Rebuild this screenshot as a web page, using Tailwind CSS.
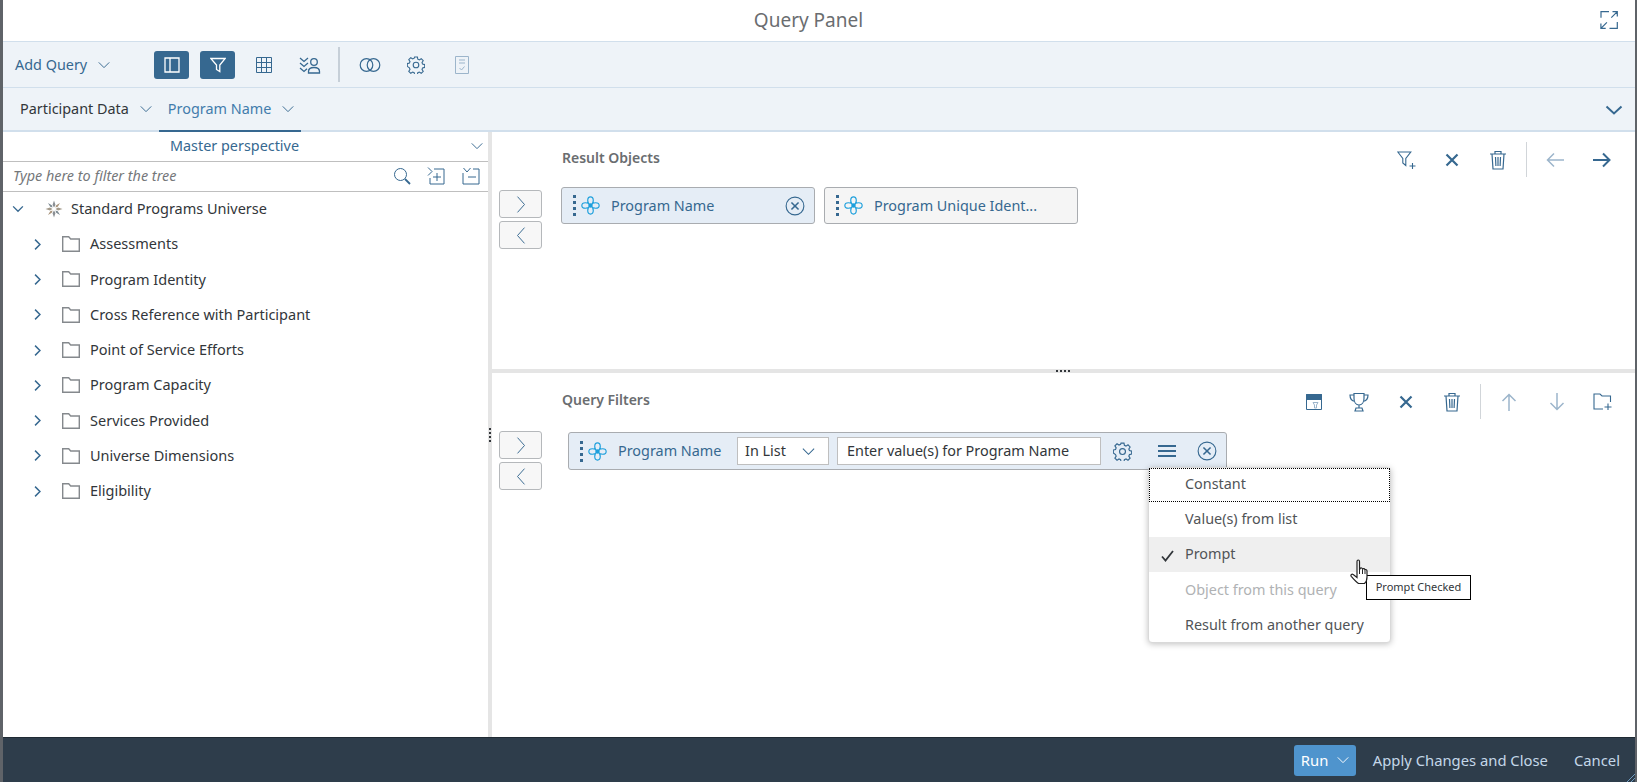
<!DOCTYPE html>
<html lang="en">
<head>
<meta charset="utf-8">
<title>Query Panel</title>
<script src="https://cdn.jsdelivr.net/npm/@tailwindcss/browser@4"></script>
</head>
<body class="m-0 overflow-hidden bg-white">
<svg class="hidden" xmlns="http://www.w3.org/2000/svg">
  <defs>
    <symbol id="down" viewBox="0 0 16 16"><path d="M2 5 8 11l6-6" fill="none" stroke="currentColor" stroke-width="1.100"/></symbol>
    <symbol id="right" viewBox="0 0 16 16"><path d="M5 2l6 6-6 6" fill="none" stroke="currentColor" stroke-width="1.800"/></symbol>
    <symbol id="rthin" viewBox="0 0 16 24"><path d="M4 3l8 9-8 9" fill="none" stroke="currentColor" stroke-width="1.100"/></symbol>
    <symbol id="lthin" viewBox="0 0 16 24"><path d="M12 3l-8 9 8 9" fill="none" stroke="currentColor" stroke-width="1.100"/></symbol>
    <symbol id="folder" viewBox="0 0 18 16"><path d="M.7 15.300V.7h6l2 2.300h8.600v12.300z" fill="none" stroke="#85898d" stroke-width="1.400"/></symbol>
    <symbol id="flower" viewBox="0 0 18 18" fill="none" stroke="#1c9fdc" stroke-width="1.100"><path d="M9 9C5.500 7 5.500 .8 9 .8S12.500 7 9 9zM9 9c3.500 2 3.500 8.200 0 8.200S5.500 11 9 9zM9 9C7 12.500 .8 12.500 .8 9S7 5.500 9 9zM9 9c2-3.500 8.200-3.500 8.200 0S11 12.500 9 9z"/><circle cx="9" cy="9" r="1.500" fill="#1c9fdc"/></symbol>
    <symbol id="cx" viewBox="0 0 18 18" fill="none" stroke="#366890" stroke-width="1"><circle cx="9" cy="9" r="8"/><path d="M5.800 5.800l6.400 6.400M12.200 5.800l-6.400 6.400" stroke-width="1.400"/></symbol>
    <symbol id="gear" viewBox="0 0 18 18" fill="none" stroke="currentColor" stroke-width="1.100"><path d="M7.600 1h2.800l.4 2.200 1.500.7 1.900-1.200 2 2-1.200 1.900.6 1.500 2.100.5v2.800l-2.100.5-.6 1.500 1.200 1.900-2 2-1.900-1.200-1.500.6-.4 2.200H7.600l-.4-2.200-1.500-.6-1.900 1.200-2-2 1.200-1.900-.6-1.500L.3 10.400V7.600l2.100-.5.6-1.500-1.200-1.900 2-2 1.900 1.200 1.500-.7z"/><circle cx="9" cy="9" r="2.800"/></symbol>
    <symbol id="trash" viewBox="0 0 18 20" fill="none" stroke="currentColor" stroke-width="1.200"><path d="M1 4h16M6 3.500V1.500h6v2M3 4l1 15h10l1-15M6.500 7l.4 9M9 7v9M11.500 7l-.4 9"/></symbol>
    <symbol id="x" viewBox="0 0 14 14"><path d="M1.500 1.500l11 11M12.500 1.500l-11 11" fill="none" stroke="currentColor" stroke-width="2.200"/></symbol>
    <symbol id="hand" viewBox="0 0 20 28"><path d="M7 2.500c0-2 2.500-2 2.500 0V11l.5-1.500c1-1 2.300-.5 2.500.5.800-.8 2.200-.4 2.400.7 1-.5 2.100 0 2.100 1.300v6c0 2.500-.8 5-2.500 6.500H8.500C6 23 3.500 20 1.200 17.300c-.9-1.400.8-2.700 2-1.700L7 18.500z" fill="#fff" stroke="#222" stroke-width="1.200"/><path d="M9.500 11v4M12.500 10.500V15M15 11.200V15" stroke="#222" fill="none"/></symbol>
  </defs>
</svg>

<div class="flex h-[782px] w-[1637px] font-['Noto_Sans',sans-serif] text-[14.4px] text-[#32363a]">
  <div class="w-[3px] shrink-0 bg-[#5f6368]"></div>
  <div class="relative flex min-w-0 flex-1 flex-col bg-white">

    <header class="relative flex h-[41px] shrink-0 items-center justify-center pr-[21px] text-[19px] text-[#6a6d70]">
      <span>Query Panel</span>
      <button class="absolute right-[17px] top-[11px] text-[#366890]" aria-label="Expand">
        <svg class="block h-[18px] w-[18px]" viewBox="0 0 18 18" fill="none" stroke="currentColor" stroke-width="1.200"><path d="M9 .7H1v6M17.300 11v6.300H9.500M.9 17.300l6-6M.9 12.500v4.800h4.800M17.300.7l-6 6M12.500.7h4.800v4.800"/></svg>
      </button>
    </header>

    <div class="flex h-[47px] shrink-0 items-center border-y border-[#d1dfec] bg-[#eef3f8] text-[#366890]">
      <span class="ml-[12px] w-[75px]">Add Query</span>
      <svg class="ml-[7px] h-[14px] w-[14px]"><use href="#down"/></svg>
      <span class="ml-[43px] flex h-[28px] w-[35px] items-center justify-center rounded-[3px] bg-[#366890] text-white">
        <svg class="h-[16px] w-[16px]" viewBox="0 0 16 16" fill="none" stroke="currentColor" stroke-width="1.300"><path d="M1 1h14v14H1zM6 1v14"/></svg>
      </span>
      <span class="ml-[11px] flex h-[28px] w-[35px] items-center justify-center rounded-[3px] bg-[#366890] text-white">
        <svg class="h-[16px] w-[16px]" viewBox="0 0 16 16" fill="none" stroke="currentColor" stroke-width="1.300"><path d="M.8 1.500h14.400L9.800 8v6.500L6.500 12.500V8z"/></svg>
      </span>
      <svg class="ml-[21px] h-[16px] w-[16px]" viewBox="0 0 16 16" fill="none" stroke="currentColor" stroke-width="1"><path d="M.5.500h15v15H.5zM5.500.500v15M10.500.500v15M.5 5.500h15M.5 10.500h15"/></svg>
      <svg class="ml-[27px] h-[18px] w-[22px]" viewBox="0 0 22 18" fill="none" stroke="currentColor" stroke-width="1.300"><path d="M1 2l4 3.500L9 2M1 7l4 3.500L9 7M1 12l4 3.500 3-2.700"/><circle cx="15" cy="6" r="3.300"/><path d="M9.500 17v-1.500c0-2.500 2.500-4 5.500-4s5.500 1.500 5.500 4V17z"/></svg>
      <span class="ml-[17px] h-[35px] w-[2px] bg-[#c6cfd8]"></span>
      <svg class="ml-[19px] h-[14px] w-[22px]" viewBox="0 0 22 14" fill="none" stroke="currentColor" stroke-width="1.200"><circle cx="7.500" cy="7" r="6.300"/><circle cx="14.500" cy="7" r="6.300"/></svg>
      <svg class="ml-[26px] h-[18px] w-[18px]"><use href="#gear"/></svg>
      <svg class="ml-[30px] h-[18px] w-[14px] text-[#9cb5cb]" viewBox="0 0 14 18" fill="none" stroke="currentColor" stroke-width="1"><path d="M.5.500h13v17H.5zM4 4h6M4 7h6M4.500 12l2 2 3-3.500"/></svg>
    </div>

    <div class="relative flex h-[44px] shrink-0 items-center border-b-2 border-[#d1dfec] bg-[#eef3f8]">
      <span class="ml-[17px]">Participant Data</span>
      <svg class="ml-[10px] h-[14px] w-[14px] text-[#366890]"><use href="#down"/></svg>
      <span class="ml-[15px] text-[#427cac]">Program Name</span>
      <svg class="ml-[10px] h-[14px] w-[14px] text-[#366890]"><use href="#down"/></svg>
      <span class="absolute bottom-[-2px] left-[156px] h-[2px] w-[142px] bg-[#366890]"></span>
      <svg class="absolute right-[12px] top-[13px] h-[18px] w-[18px] text-[#366890]" viewBox="0 0 18 18"><path d="M1.500 5.500 9 12.500l7.500-7" fill="none" stroke="currentColor" stroke-width="2"/></svg>
    </div>

    <div class="flex min-h-0 flex-1">
      <aside class="flex w-[485px] shrink-0 flex-col">
        <div class="relative flex h-[29px] items-center justify-center pb-[2px] pr-[69px] text-[#366890]">
          <span class="ml-[47px]">Master perspective</span>
          <svg class="absolute right-[4px] top-[7px] h-[14px] w-[14px]"><use href="#down"/></svg>
        </div>
        <div class="flex h-[31px] items-center border-y border-[#bfbfbf] pb-[2px] pl-[10px] text-[#366890]">
          <span class="flex-1 italic text-[#74777a]">Type here to filter the tree</span>
          <svg class="h-[18px] w-[18px]" viewBox="0 0 18 18" fill="none" stroke="currentColor"><circle cx="7.500" cy="7.500" r="6"/><path d="M12 12l5 5" stroke-width="1.800"/></svg>
          <svg class="ml-[16px] h-[18px] w-[18px]" viewBox="0 0 18 18" fill="none" stroke="currentColor"><path d="M1 .5l4 4-4 4M7 2h10v15H3v-6M10 6v8M6 10h8"/></svg>
          <svg class="ml-[17px] mr-[8px] h-[18px] w-[18px]" viewBox="0 0 18 18" fill="none" stroke="currentColor"><path d="M1.500 1l3.500 4 3.500-4M11 2h6v15H1V6M6 10h8"/></svg>
        </div>
        <div class="flex flex-col text-[14.5px]">
          <div class="flex h-[34.500px] items-center">
            <svg class="ml-[9px] h-[12px] w-[12px] text-[#366890]" viewBox="0 0 16 16"><path d="M1.500 4.500 8 11l6.500-6.500" fill="none" stroke="currentColor" stroke-width="1.800"/></svg>
            <svg class="ml-[21px] h-[18px] w-[18px]" viewBox="0 0 18 18"><path d="M9 .5 10.500 5 9 7.500 7.500 5zM9 17.500 10.500 13 9 10.500 7.500 13z" fill="#8a8f94"/><path d="M.5 9 5 7.500 7.500 9 5 10.500zM17.500 9 13 7.500 10.500 9 13 10.500z" fill="#a39a8a"/><path d="M3 3 6.800 5.200 7.600 7.600 5.200 6.800zM15 15 11.200 12.800 10.400 10.400 12.800 11.200z" fill="#7c8a92"/><path d="M15 3 12.800 6.800 10.400 7.600 11.200 5.200zM3 15 5.200 11.200 7.600 10.400 6.800 12.800z" fill="#a8937a"/></svg>
            <span class="ml-[8px]">Standard Programs Universe</span>
          </div>
          <div class="flex h-[35.300px] items-center"><svg class="ml-[28px] h-[13px] w-[13px] text-[#366890]"><use href="#right"/></svg><svg class="ml-[18px] h-[16px] w-[18px]"><use href="#folder"/></svg><span class="ml-[10px]">Assessments</span></div>
          <div class="flex h-[35.300px] items-center"><svg class="ml-[28px] h-[13px] w-[13px] text-[#366890]"><use href="#right"/></svg><svg class="ml-[18px] h-[16px] w-[18px]"><use href="#folder"/></svg><span class="ml-[10px]">Program Identity</span></div>
          <div class="flex h-[35.300px] items-center"><svg class="ml-[28px] h-[13px] w-[13px] text-[#366890]"><use href="#right"/></svg><svg class="ml-[18px] h-[16px] w-[18px]"><use href="#folder"/></svg><span class="ml-[10px]">Cross Reference with Participant</span></div>
          <div class="flex h-[35.300px] items-center"><svg class="ml-[28px] h-[13px] w-[13px] text-[#366890]"><use href="#right"/></svg><svg class="ml-[18px] h-[16px] w-[18px]"><use href="#folder"/></svg><span class="ml-[10px]">Point of Service Efforts</span></div>
          <div class="flex h-[35.300px] items-center"><svg class="ml-[28px] h-[13px] w-[13px] text-[#366890]"><use href="#right"/></svg><svg class="ml-[18px] h-[16px] w-[18px]"><use href="#folder"/></svg><span class="ml-[10px]">Program Capacity</span></div>
          <div class="flex h-[35.300px] items-center"><svg class="ml-[28px] h-[13px] w-[13px] text-[#366890]"><use href="#right"/></svg><svg class="ml-[18px] h-[16px] w-[18px]"><use href="#folder"/></svg><span class="ml-[10px]">Services Provided</span></div>
          <div class="flex h-[35.300px] items-center"><svg class="ml-[28px] h-[13px] w-[13px] text-[#366890]"><use href="#right"/></svg><svg class="ml-[18px] h-[16px] w-[18px]"><use href="#folder"/></svg><span class="ml-[10px]">Universe Dimensions</span></div>
          <div class="flex h-[35.300px] items-center"><svg class="ml-[28px] h-[13px] w-[13px] text-[#366890]"><use href="#right"/></svg><svg class="ml-[18px] h-[16px] w-[18px]"><use href="#folder"/></svg><span class="ml-[10px]">Eligibility</span></div>
        </div>
      </aside>

      <div class="relative w-[4px] shrink-0 bg-[#e5e5e5]">
        <span class="absolute left-[1px] top-[296px] flex flex-col gap-[2px]"><i class="block h-[2px] w-[2px] bg-[#32363a]"></i><i class="block h-[2px] w-[2px] bg-[#32363a]"></i><i class="block h-[2px] w-[2px] bg-[#32363a]"></i><i class="block h-[2px] w-[2px] bg-[#32363a]"></i></span>
      </div>

      <main class="flex min-w-0 flex-1 flex-col">
        <section class="h-[237px] shrink-0 pl-[7px]">
          <div class="flex h-[55px] items-center">
            <h2 class="ml-[63px] mt-[-5px] flex-1 text-[14px] font-semibold text-[#6a6d70]">Result Objects</h2>
            <svg class="h-[20px] w-[20px] text-[#366890]" viewBox="0 0 20 20" fill="none" stroke="currentColor" stroke-width="1.100"><path d="M.8 2h13L8.800 8.500v7l-3-2.500V8.500zM15.500 13v6M12.500 16h6"/></svg>
            <svg class="ml-[28px] h-[14px] w-[14px] text-[#366890]"><use href="#x"/></svg>
            <svg class="ml-[30px] h-[20px] w-[18px] text-[#366890]"><use href="#trash"/></svg>
            <span class="ml-[19px] h-[35px] w-px bg-[#d1d5d9]"></span>
            <svg class="ml-[19px] h-[16px] w-[18px] text-[#9cb5cb]" viewBox="0 0 18 16" fill="none" stroke="currentColor" stroke-width="1.500"><path d="M18 8H1.500M8 1.500 1.500 8 8 14.500"/></svg>
            <svg class="ml-[29px] mr-[24px] h-[16px] w-[18px] text-[#366890]" viewBox="0 0 18 16" fill="none" stroke="currentColor" stroke-width="2"><path d="M0 8h16.500M10 1.500 16.500 8 10 14.500"/></svg>
          </div>
          <div class="flex items-start">
            <div class="flex w-[43px] flex-col gap-[3px] pt-[3px]">
              <span class="flex h-[28px] items-center justify-center rounded-[3px] border border-[#b5b8bb] bg-[#f7f7f7] text-[#366890]"><svg class="h-[21px] w-[14px]"><use href="#rthin"/></svg></span>
              <span class="flex h-[28px] items-center justify-center rounded-[3px] border border-[#b5b8bb] bg-[#f7f7f7] text-[#366890]"><svg class="h-[21px] w-[14px]"><use href="#lthin"/></svg></span>
            </div>
            <div class="ml-[19px] flex h-[37px] w-[254px] items-center rounded-[3px] border border-[#a9acb0] bg-[#e5edf6] text-[#366890]">
              <span class="ml-[11px] flex flex-col gap-[3px]"><i class="block h-[3px] w-[3px] bg-[#366890]"></i><i class="block h-[3px] w-[3px] bg-[#366890]"></i><i class="block h-[3px] w-[3px] bg-[#366890]"></i><i class="block h-[3px] w-[3px] bg-[#366890]"></i></span>
              <svg class="ml-[5px] h-[19px] w-[19px]"><use href="#flower"/></svg>
              <span class="ml-[11px] flex-1">Program Name</span>
              <svg class="mr-[9px] h-[20px] w-[20px]"><use href="#cx"/></svg>
            </div>
            <div class="ml-[9px] flex h-[37px] w-[254px] items-center rounded-[3px] border border-[#a9acb0] bg-[#f5f5f5] text-[#366890]">
              <span class="ml-[11px] flex flex-col gap-[3px]"><i class="block h-[3px] w-[3px] bg-[#366890]"></i><i class="block h-[3px] w-[3px] bg-[#366890]"></i><i class="block h-[3px] w-[3px] bg-[#366890]"></i><i class="block h-[3px] w-[3px] bg-[#366890]"></i></span>
              <svg class="ml-[5px] h-[19px] w-[19px]"><use href="#flower"/></svg>
              <span class="ml-[11px]">Program Unique Ident...</span>
            </div>
          </div>
        </section>

        <div class="relative h-[4px] shrink-0 bg-[#e5e5e5]">
          <span class="absolute left-[564px] top-[1px] flex gap-[2px]"><i class="block h-[2px] w-[2px] bg-[#32363a]"></i><i class="block h-[2px] w-[2px] bg-[#32363a]"></i><i class="block h-[2px] w-[2px] bg-[#32363a]"></i><i class="block h-[2px] w-[2px] bg-[#32363a]"></i></span>
        </div>

        <section class="min-h-0 flex-1 pl-[7px]">
          <div class="flex h-[57px] items-center">
            <h2 class="ml-[63px] mt-[-4px] flex-1 text-[14px] font-semibold text-[#6a6d70]">Query Filters</h2>
            <svg class="h-[16px] w-[16px] text-[#366890]" viewBox="0 0 16 16" fill="none" stroke="currentColor"><path d="M.5.500h15v15H.5z"/><path d="M.5.500h15v5H.5z" fill="currentColor"/><path d="M7 8.500h5l-1.500 2.500v3H8.500v-3z" stroke="#9cb5cb"/></svg>
            <svg class="ml-[27px] h-[20px] w-[20px] text-[#366890]" viewBox="0 0 20 20" fill="none" stroke="currentColor" stroke-width="1.200"><path d="M5 1.500h10v5c0 4-2.200 6.500-5 6.500S5 10.500 5 6.500zM5 3H1c0 4 1.500 6 5 6.500M15 3h4c0 4-1.500 6-5 6.500M10 13v3M6 19l1-3h6l1 3z"/></svg>
            <svg class="ml-[30px] h-[14px] w-[14px] text-[#366890]"><use href="#x"/></svg>
            <svg class="ml-[30px] h-[20px] w-[18px] text-[#366890]"><use href="#trash"/></svg>
            <span class="ml-[19px] h-[35px] w-px bg-[#d1d5d9]"></span>
            <svg class="ml-[20px] h-[18px] w-[16px] text-[#9cb5cb]" viewBox="0 0 16 18" fill="none" stroke="currentColor" stroke-width="1.500"><path d="M8 18V1.500M1.500 8 8 1.500 14.500 8"/></svg>
            <svg class="ml-[32px] h-[18px] w-[16px] text-[#9cb5cb]" viewBox="0 0 16 18" fill="none" stroke="currentColor" stroke-width="1.500"><path d="M8 0v16.500M1.500 10 8 16.500 14.500 10"/></svg>
            <svg class="ml-[28px] mr-[23px] h-[17px] w-[19px] text-[#366890]" viewBox="0 0 19 17" fill="none" stroke="currentColor" stroke-width="1.100"><path d="M10 16H1V1h6l2 2h8.500v6M15 10.500v6.500M11.500 14h7"/></svg>
          </div>
          <div class="flex items-start">
            <div class="flex w-[43px] flex-col gap-[3px] pt-[1px]">
              <span class="flex h-[28px] items-center justify-center rounded-[3px] border border-[#b5b8bb] bg-[#f7f7f7] text-[#366890]"><svg class="h-[21px] w-[14px]"><use href="#rthin"/></svg></span>
              <span class="flex h-[28px] items-center justify-center rounded-[3px] border border-[#b5b8bb] bg-[#f7f7f7] text-[#366890]"><svg class="h-[21px] w-[14px]"><use href="#lthin"/></svg></span>
            </div>
            <div class="ml-[26px] mt-[2px] flex h-[38px] w-[659px] items-center rounded-[3px] border border-[#a9acb0] bg-[#e5edf6] text-[#366890]">
              <span class="ml-[11px] flex flex-col gap-[3px]"><i class="block h-[3px] w-[3px] bg-[#366890]"></i><i class="block h-[3px] w-[3px] bg-[#366890]"></i><i class="block h-[3px] w-[3px] bg-[#366890]"></i><i class="block h-[3px] w-[3px] bg-[#366890]"></i></span>
              <svg class="ml-[5px] h-[19px] w-[19px]"><use href="#flower"/></svg>
              <span class="ml-[11px] w-[107px]">Program Name</span>
              <span class="ml-[12px] flex h-[28px] w-[92px] items-center border border-[#bfbfbf] bg-white pl-[7px] text-[#32363a]">In List<svg class="ml-[15px] h-[15px] w-[15px] text-[#366890]"><use href="#down"/></svg></span>
              <span class="ml-[8px] flex h-[28px] w-[264px] items-center border border-[#bfbfbf] bg-white pl-[9px] text-[#32363a]">Enter value(s) for Program Name</span>
              <svg class="ml-[12px] h-[19px] w-[19px]"><use href="#gear"/></svg>
              <svg class="ml-[26px] h-[14px] w-[18px]" viewBox="0 0 18 14" fill="none" stroke="currentColor" stroke-width="2"><path d="M0 2h18M0 7h18M0 12h18"/></svg>
              <svg class="ml-[21px] h-[20px] w-[20px]"><use href="#cx"/></svg>
            </div>
          </div>
        </section>
      </main>
    </div>

    <footer class="relative flex h-[45px] shrink-0 items-center justify-end border-t border-[#1f2a33] bg-[#2e3d4b] text-[14.8px] text-[#c4d7e8]">
      <span class="flex h-[31px] w-[62px] items-center rounded-[3px] bg-[#4f94cd] pl-[7px] text-white">Run<svg class="ml-[8px] h-[14px] w-[14px]"><use href="#down"/></svg></span>
      <span class="ml-[17px]">Apply Changes and Close</span>
      <span class="ml-[26px] mr-[15px]">Cancel</span>
      <svg class="absolute bottom-0 right-0 h-[8px] w-[8px] text-[#6f9cc2]" viewBox="0 0 8 8" fill="none" stroke="currentColor"><path d="M0 8l8-8M4 8l4-4"/></svg>
    </footer>

    <div class="absolute left-[1145px] top-[467px] w-[243px] rounded-[4px] border border-[#d9d9d9] bg-white text-[#515457] shadow-[0_1px_6px_rgba(0,0,0,0.25)]">
      <div class="flex h-[34px] items-center border border-dotted border-black pb-[3px] pl-[35px]">Constant</div>
      <div class="flex h-[35px] items-center pb-[1px] pl-[36px]">Value(s) from list</div>
      <div class="relative flex h-[35px] items-center bg-[#efefef] pb-[1px] pl-[36px]"><svg class="absolute left-[12px] top-[13px] h-[12px] w-[13px] text-[#32363a]" viewBox="0 0 13 12"><path d="M1 6.500 4.500 10.500 12 1" fill="none" stroke="currentColor" stroke-width="1.800"/></svg>Prompt</div>
      <div class="flex h-[35px] items-center pl-[36px] text-[#b0b2b4]">Object from this query</div>
      <div class="flex h-[35px] items-center pl-[36px]">Result from another query</div>
    </div>
    <div class="absolute left-[1363px] top-[575px] flex h-[25px] w-[105px] items-center justify-center border border-black bg-white text-[11px] text-[#32363a]">Prompt Checked</div>
    <svg class="absolute left-[1347px] top-[559px] h-[28px] w-[20px]"><use href="#hand"/></svg>
  </div>
  <div class="w-[2px] shrink-0 bg-[#5f6368]"></div>
</div>
</body>
</html>
